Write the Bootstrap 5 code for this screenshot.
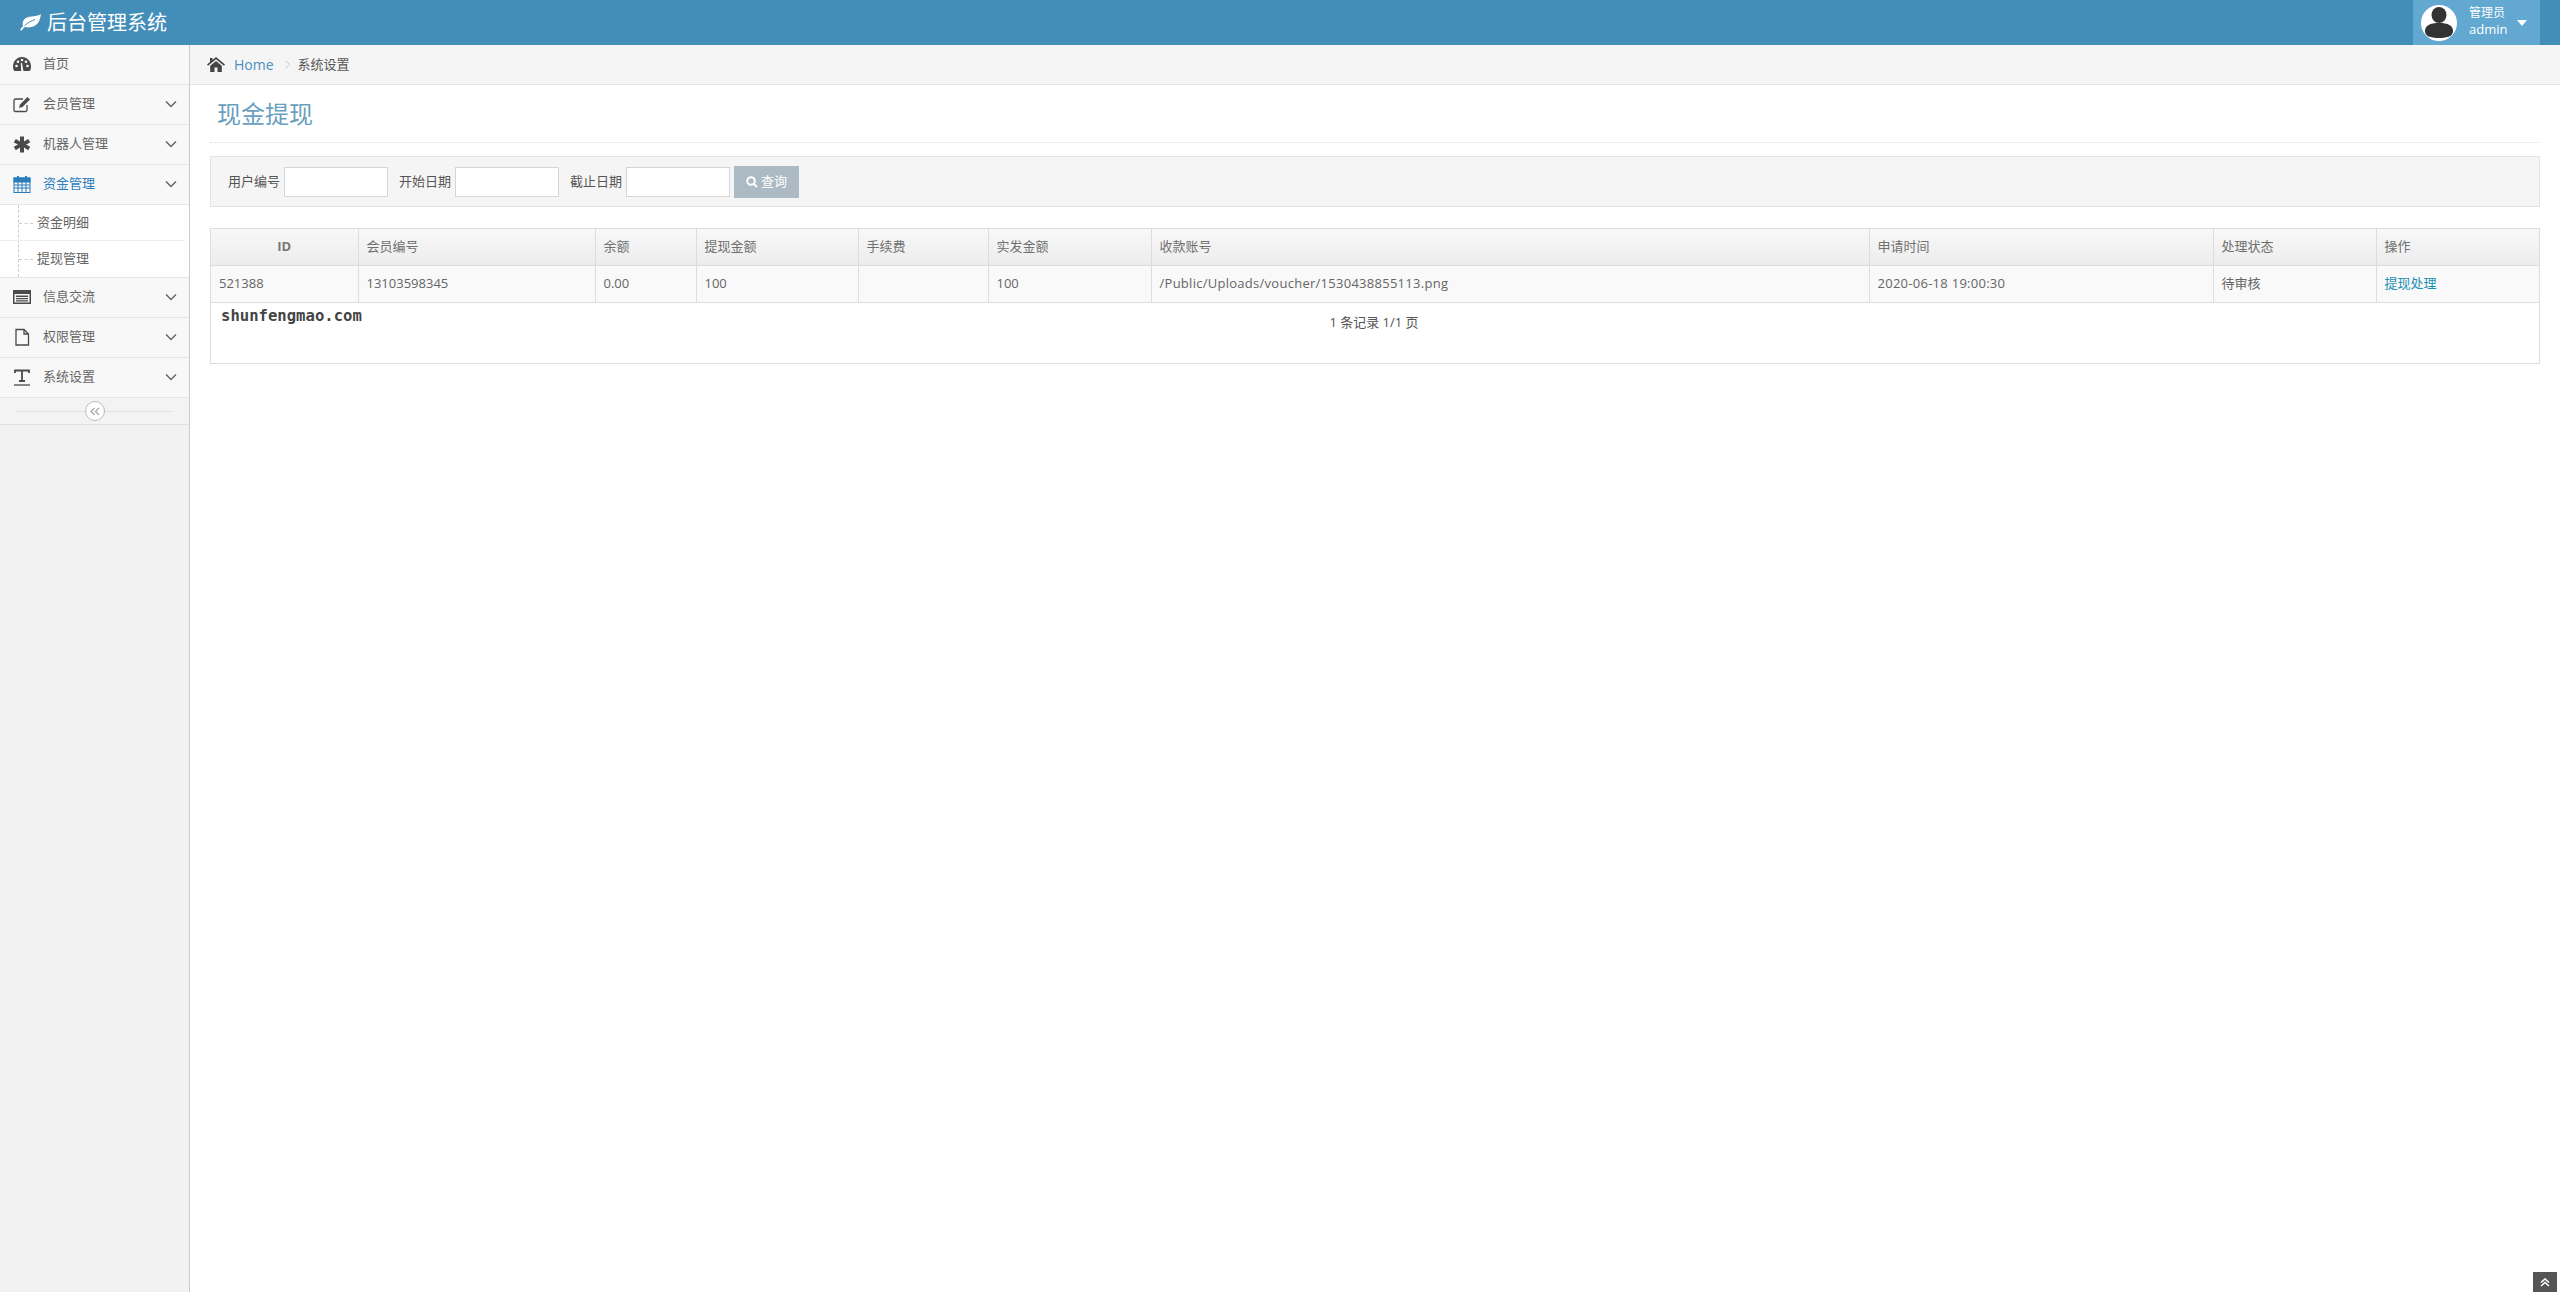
<!DOCTYPE html>
<html lang="zh-CN">
<head>
<meta charset="utf-8">
<title>后台管理系统</title>
<link rel="stylesheet" href="https://cdn.jsdelivr.net/npm/bootstrap@5.3.0/dist/css/bootstrap.min.css">
<style>
html,body{height:100%}
body{font-family:"Open Sans","Noto Sans CJK SC",sans-serif;font-size:13px;color:#393939;background:#fff;overflow:hidden}
.topbar{height:45px;background:#438eb9;color:#fff}
.brandline{font-size:20px;line-height:1;padding-left:20px;gap:6px;color:#fff}
.userbox{width:127px;height:45px;background:#62a8d1;margin-right:20px;padding-left:8px}
.avatarball{width:36px;height:36px;flex:none;margin-right:12px}
.usertext{font-size:13px;line-height:16px;width:48px;flex:none;padding-bottom:3px}
.usertext small{display:block;font-size:12px;line-height:16px}
.caretdown{width:0;height:0;border-left:5px solid transparent;border-right:5px solid transparent;border-top:6px solid #fff}
.shell{height:calc(100% - 45px)}
.sidecol{width:190px;flex:none;background:#f2f2f2;border-right:1px solid #ccc}
.menuhead{height:40px;background:#f8f8f8;border-bottom:1px solid #e5e5e5;color:#666;padding:0 12px 2px 12px;font-size:13px}
.menuhead.activehead{color:#2b7dbc}
.menuicon{width:20px;height:20px;margin-right:11px;flex:none;color:#4a4a4a}
.activehead .menuicon{color:#2b7dbc}
.chev{width:12px;height:8px;margin-left:auto;margin-right:0;color:#666}
.subwrap{background:#fff;position:relative;border-bottom:1px solid #e5e5e5}
.subwrap::before{content:"";position:absolute;left:18px;top:0;bottom:0;border-left:1px dashed #ccc}
.subitem{height:36px;padding-left:37px;color:#666;position:relative}
.subitem::before{content:"";position:absolute;left:19px;top:18px;width:14px;border-top:1px dashed #ccc}
.subitem.firstsub{border-bottom:1px solid #eee;margin-right:5px}
.collapsebar{height:27px;background:#f3f3f3;border-bottom:1px solid #e0e0e0;position:relative}
.collapsebar::before{content:"";position:absolute;left:16px;right:16px;top:13px;border-top:1px solid #e0e0e0}
.collapseball{width:20px;height:20px;border-radius:50%;border:1px solid #bbb;background:#fff;position:relative}
.crumbbar{height:40px;background:#f5f5f5;border-bottom:1px solid #e5e5e5;padding-left:17px;font-size:13px}
.crumbbar a{color:#4c8fbd;text-decoration:none;margin-left:9px;font-size:14px}
.crumbsep{margin:0 8px 0 11px}
.crumbcur{color:#555;font-size:13px}
.mainarea{padding:0 20px;flex:1;min-width:0}
.pagehead{height:58px;border-bottom:1px dotted #e2e2e2;padding-left:7px;color:#6a9fc0;font-size:24px;line-height:57px}
.searchwell{height:51px;margin-top:13px;background:#f5f5f5;border:1px solid #e3e3e3;padding-left:17px;color:#555;font-size:13px}
.searchfield{width:104px;height:30px;border:1px solid #d5d5d5;background:#fff;margin-left:4px;margin-right:11px;padding:0}
.searchfield.tailfield{margin-right:4px}
.querybtn{height:32px;width:65px;background:#abbac3;color:#fff;border:0;border-radius:0;font-size:13px;padding:0;gap:3px}
.gridbox{margin-top:21px;border:1px solid #ddd;height:136px;position:relative}
.gridtable{table-layout:fixed;width:100%;margin:0;font-size:13px;color:#666;border-collapse:collapse}
.gridtable th{font-weight:400;height:36px;padding:0 8px;background:linear-gradient(#f8f8f8,#ececec);border-bottom:1px solid #ddd;border-right:1px solid #ddd;color:#707070;vertical-align:middle;text-align:left}
.gridtable td{height:37px;padding:0 8px;background:#f9f9f9;border-bottom:1px solid #ddd;border-right:1px solid #ddd;vertical-align:middle}
.gridtable tr>*:last-child{border-right:0}
.gridtable th:nth-child(1){width:147px;text-align:center;font-weight:700;color:#777}
.gridtable th:nth-child(2){width:237px}
.gridtable th:nth-child(3){width:101px}
.gridtable th:nth-child(4){width:162px}
.gridtable th:nth-child(5){width:130px}
.gridtable th:nth-child(6){width:163px}
.gridtable th:nth-child(7){width:718px}
.gridtable th:nth-child(8){width:344px}
.gridtable th:nth-child(9){width:163px}
.gridtable a{color:#1c8fb5;text-decoration:none}
.widecell{letter-spacing:.27px}
.footline{height:60px;position:relative;text-align:center;padding-top:10px;color:#555;line-height:18px;padding-right:2px}
.watermark{position:absolute;left:10px;top:3px;font-family:"DejaVu Sans Mono",monospace;font-weight:700;font-size:15.6px;color:#444;line-height:20px}
.totopbtn{position:fixed;right:3px;bottom:0;width:24px;height:20px;background:#555;color:#fff}
</style>
</head>
<body>
<nav class="topbar d-flex align-items-center">
  <div class="brandline d-flex align-items-center">
    <svg width="21" height="17" viewBox="0 0 21 17"><path d="M21 0C17 3 10 1.500 6 4 2.500 6 2 10 3.500 12.500 9 14.500 15 13 18 9 20 6 20.500 3 21 0Z" fill="#fff"/><path d="M.8 16.300C4 11.500 8 8.500 14 6.500" fill="none" stroke="#fff" stroke-width="1.800"/><path d="M4.500 11.500C8 8.500 11 7 15 5.500" fill="none" stroke="#438eb9" stroke-width="1"/></svg>
    <span>后台管理系统</span>
  </div>
  <div class="userbox ms-auto d-flex align-items-center">
    <svg class="avatarball" viewBox="0 0 36 36"><circle cx="18" cy="18" r="18" fill="#fff"/><ellipse cx="18" cy="10" rx="7.500" ry="8" fill="#333"/><path d="M4 26C4 20.500 9 18 18 18S32 20.500 32 26C32 31 27 33 18 33S4 31 4 26Z" fill="#333"/></svg>
    <div class="usertext"><small>管理员</small>admin</div>
    <span class="caretdown"></span>
  </div>
</nav>
<div class="shell d-flex">
  <aside class="sidecol">
    <div class="menuhead d-flex align-items-center">
      <svg class="menuicon" viewBox="0 0 20 20" fill="currentColor"><path d="M10 3C4.500 3 1 7.500 1 12.500 1 14.500 1.500 16 2.500 17H17.500C18.500 16 19 14.500 19 12.500 19 7.500 15.500 3 10 3Z"/><g fill="#f8f8f8"><circle cx="4.500" cy="12" r="1.300"/><circle cx="6" cy="7.800" r="1.300"/><circle cx="10" cy="6" r="1.300"/><circle cx="14" cy="7.800" r="1.300"/><circle cx="15.500" cy="12" r="1.300"/><path d="M9.200 17.500 8.800 9H10L11.500 17.500Z"/></g></svg>
      <span>首页</span>
    </div>
    <div class="menuhead d-flex align-items-center">
      <svg class="menuicon" viewBox="0 0 20 20" fill="none" stroke="currentColor" stroke-width="1.300"><path d="M15 11V16C15 17 14.300 17.500 13.500 17.500H3.500C2.500 17.500 2 17 2 16V6.500C2 5.500 2.500 5 3.500 5H11"/><path d="M7 14 8 10.500 15.500 3 18 5.500 10.500 13Z" fill="currentColor" stroke="none"/></svg>
      <span>会员管理</span>
      <svg class="chev" viewBox="0 0 12 8" fill="none" stroke="currentColor" stroke-width="1.500"><path d="M1 1.500 6 6.500 11 1.500"/></svg>
    </div>
    <div class="menuhead d-flex align-items-center">
      <svg class="menuicon" viewBox="0 0 20 20" fill="currentColor"><path d="M8 2.500H12V7.500L16.200 5 18.200 8.400 14 10.500 18.200 12.800 16.200 16.200 12 13.600V18.500H8V13.600L3.800 16.200 1.800 12.800 6 10.500 1.800 8.400 3.800 5 8 7.500Z"/></svg>
      <span>机器人管理</span>
      <svg class="chev" viewBox="0 0 12 8" fill="none" stroke="currentColor" stroke-width="1.500"><path d="M1 1.500 6 6.500 11 1.500"/></svg>
    </div>
    <div class="menuhead activehead d-flex align-items-center">
      <svg class="menuicon" viewBox="0 0 20 20" fill="none" stroke="currentColor" stroke-width="1"><rect x="2" y="4" width="16" height="14.500" fill="none"/><rect x="2" y="4" width="16" height="4" fill="currentColor"/><path d="M2 11H18M2 14H18M6 8V18M10 8V18M14 8V18"/><path d="M6 2V6M14 2V6" stroke-width="2"/></svg>
      <span>资金管理</span>
      <svg class="chev" viewBox="0 0 12 8" fill="none" stroke="#666" stroke-width="1.500"><path d="M1 1.500 6 6.500 11 1.500"/></svg>
    </div>
    <div class="subwrap">
      <div class="subitem firstsub d-flex align-items-center">资金明细</div>
      <div class="subitem d-flex align-items-center">提现管理</div>
    </div>
    <div class="menuhead d-flex align-items-center">
      <svg class="menuicon" viewBox="0 0 20 20" fill="currentColor"><path fill-rule="evenodd" d="M1 3H19V17H1ZM2.500 7V15.500H17.500V7Z"/><path d="M4 8.500H16V10H4ZM4 11H16V12.300H4ZM4 13.300H16V14.600H4Z"/></svg>
      <span>信息交流</span>
      <svg class="chev" viewBox="0 0 12 8" fill="none" stroke="currentColor" stroke-width="1.500"><path d="M1 1.500 6 6.500 11 1.500"/></svg>
    </div>
    <div class="menuhead d-flex align-items-center">
      <svg class="menuicon" viewBox="0 0 20 20" fill="none" stroke="currentColor" stroke-width="1.300"><path d="M4 2.500H12L16.500 7V18H4Z"/><path d="M12 2.500V7H16.500"/></svg>
      <span>权限管理</span>
      <svg class="chev" viewBox="0 0 12 8" fill="none" stroke="currentColor" stroke-width="1.500"><path d="M1 1.500 6 6.500 11 1.500"/></svg>
    </div>
    <div class="menuhead d-flex align-items-center">
      <svg class="menuicon" viewBox="0 0 20 20" fill="none" stroke="currentColor" stroke-width="1.800"><path d="M3 6V3.500H17V6M10 3.500V14M7 14H13"/><path d="M2 18H18" stroke-width="1.300"/></svg>
      <span>系统设置</span>
      <svg class="chev" viewBox="0 0 12 8" fill="none" stroke="currentColor" stroke-width="1.500"><path d="M1 1.500 6 6.500 11 1.500"/></svg>
    </div>
    <div class="collapsebar d-flex align-items-center justify-content-center">
      <div class="collapseball d-flex align-items-center justify-content-center">
        <svg width="10" height="9" viewBox="0 0 10 9" fill="none" stroke="#aaa" stroke-width="1.400"><path d="M4.500 1 1 4.500 4.500 8M9 1 5.500 4.500 9 8"/></svg>
      </div>
    </div>
  </aside>
  <main class="flex-grow-1 d-flex flex-column" style="min-width:0">
    <div class="crumbbar d-flex align-items-center">
      <svg width="18" height="15" viewBox="0 0 18 15" fill="#444"><path d="M9 0 18 7.500 17 8.800 9 2.200 1 8.800 0 7.500 3 5V1H5.500V3ZM3.200 8.800 9 4 14.800 8.800V15H10.500V10.500H7.500V15H3.200Z"/></svg>
      <a href="#">Home</a>
      <svg class="crumbsep" width="5" height="9" viewBox="0 0 5 9" fill="none" stroke="#c4c8cf" stroke-width="1"><path d="M.5 .5 4.500 4.500 .5 8.500"/></svg>
      <span class="crumbcur">系统设置</span>
    </div>
    <div class="mainarea">
      <div class="pagehead">现金提现</div>
      <form class="searchwell d-flex align-items-center">
        <span>用户编号</span><input class="searchfield" type="text">
        <span>开始日期</span><input class="searchfield" type="text">
        <span>截止日期</span><input class="searchfield tailfield" type="text">
        <button type="button" class="querybtn btn d-inline-flex align-items-center justify-content-center">
          <svg width="12" height="12" viewBox="0 0 12 12" fill="none" stroke="#fff" stroke-width="2"><circle cx="5" cy="5" r="3.800"/><path d="M8 8 11 11"/></svg>查询
        </button>
      </form>
      <div class="gridbox">
        <table class="gridtable">
          <thead><tr><th>ID</th><th>会员编号</th><th>余额</th><th>提现金额</th><th>手续费</th><th>实发金额</th><th>收款账号</th><th>申请时间</th><th>处理状态</th><th>操作</th></tr></thead>
          <tbody><tr><td>521388</td><td>13103598345</td><td>0.00</td><td>100</td><td></td><td>100</td><td class="widecell">/Public/Uploads/voucher/1530438855113.png</td><td class="widecell">2020-06-18 19:00:30</td><td>待审核</td><td><a href="#">提现处理</a></td></tr></tbody>
        </table>
        <div class="footline">
          <span class="watermark">shunfengmao.com</span>
          1 条记录 1/1 页
        </div>
      </div>
    </div>
  </main>
</div>
<div class="totopbtn d-flex align-items-center justify-content-center">
  <svg width="10" height="9" viewBox="0 0 10 9" fill="none" stroke="#fff" stroke-width="1.600"><path d="M1 4.500 5 1 9 4.500M1 8 5 4.500 9 8"/></svg>
</div>
</body>
</html>
